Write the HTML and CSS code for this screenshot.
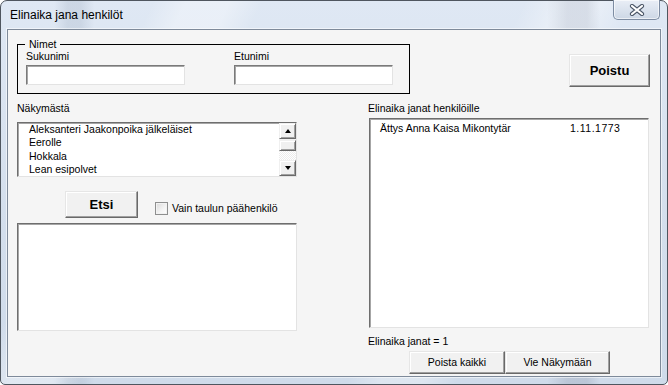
FILE: index.html
```html
<!DOCTYPE html>
<html lang="fi">
<head>
<meta charset="utf-8">
<title>Elinaika jana henkilöt</title>
<link rel="stylesheet" href="styles.css">
</head>
<body>
<div class="window">
  <div class="titlebar">
    <span class="title">Elinaika jana henkilöt</span>
    <div class="close">
      <svg width="16" height="12" viewBox="0 0 16 12">
        <path d="M3 2 L13 10 M13 2 L3 10" stroke="#4a5566" stroke-width="4.2" stroke-linecap="round"/>
        <path d="M3 2 L13 10 M13 2 L3 10" stroke="#ffffff" stroke-width="2.2" stroke-linecap="round"/>
      </svg>
    </div>
  </div>
  <div class="client">
    <div class="top-row">
      <fieldset class="group">
        <legend>Nimet</legend>
        <div class="fields">
          <div class="field">
            <span class="field-label">Sukunimi</span>
            <span class="textbox"></span>
          </div>
          <div class="field field-second">
            <span class="field-label">Etunimi</span>
            <span class="textbox"></span>
          </div>
        </div>
      </fieldset>
      <button class="btn btn-bold btn-poistu">Poistu</button>
    </div>
    <div class="main">
      <div class="col-left">
        <div class="label">Näkymästä</div>
        <div class="listbox list-views">
          <ul class="items">
            <li>Aleksanteri Jaakonpoika jälkeläiset</li>
            <li>Eerolle</li>
            <li>Hokkala</li>
            <li>Lean esipolvet</li>
          </ul>
          <div class="scrollbar">
            <div class="sb-btn"><span class="arrow-up"></span></div>
            <div class="sb-gap"></div>
            <div class="sb-thumb"></div>
            <div class="sb-track"></div>
            <div class="sb-btn sb-down"><span class="arrow-down"></span></div>
          </div>
        </div>
        <div class="search-row">
          <button class="btn btn-bold btn-etsi">Etsi</button>
          <div class="check">
            <span class="checkbox"></span>
            <span class="check-text">Vain taulun päähenkilö</span>
          </div>
        </div>
        <div class="listbox list-results"></div>
      </div>
      <div class="col-right">
        <div class="label">Elinaika janat henkilöille</div>
        <div class="listbox list-spans">
          <div class="span-row">
            <span class="span-name">Ättys Anna Kaisa Mikontytär</span>
            <span class="span-date">1.11.1773</span>
          </div>
        </div>
        <div class="count">Elinaika janat = 1</div>
        <div class="btn-row">
          <button class="btn btn-clear">Poista kaikki</button>
          <button class="btn btn-export">Vie Näkymään</button>
        </div>
      </div>
    </div>
  </div>
</div>
</body>
</html>
```

FILE: styles.css
```css
* { box-sizing: border-box; }

html, body {
  margin: 0;
  padding: 0;
  background: #ffffff;
}

body {
  font-family: "Liberation Sans", Arial, sans-serif;
  font-size: 10.5px;
  color: #000;
}

.window {
  width: 668px;
  height: 385px;
  border: 1px solid #4f565f;
  border-radius: 7px 7px 5px 5px;
  padding: 0 6px 7px 6px;
  display: flex;
  flex-direction: column;
  background:
    linear-gradient(115deg, rgba(255,255,255,0) 0 18%, rgba(255,255,255,0.35) 22% 27%, rgba(255,255,255,0) 31% 62%, rgba(255,255,255,0.3) 66% 71%, rgba(255,255,255,0) 75%),
    linear-gradient(90deg, rgba(150,165,185,0) 0 8%, rgba(150,165,185,0.25) 10% 12%, rgba(150,165,185,0) 14% 82%, rgba(140,150,170,0.3) 85% 88%, rgba(150,165,185,0) 90%),
    linear-gradient(180deg, #dfe8f4 0%, #d3deec 60%, #cfdbea 100%);
}

.titlebar {
  height: 28px;
  display: flex;
  align-items: flex-start;
  flex: none;
}

.title {
  font-size: 12px;
  line-height: 14px;
  margin: 7px 0 0 3px;
  color: #000;
}

.close {
  margin: -1px 1px 0 auto;
  width: 47px;
  height: 20px;
  border: 1px solid #7d8ca2;
  border-top: none;
  border-radius: 0 0 5px 5px;
  background: linear-gradient(180deg, #e9eef6 0%, #dbe3ee 50%, #cdd7e5 100%);
  box-shadow: inset 0 0 0 1px rgba(255,255,255,0.6);
  display: flex;
  align-items: center;
  justify-content: center;
}

.close svg { display: block; margin-top: 1px; }

.client {
  width: 654px;
  height: 348px;
  border: 1px solid #7e8a9a;
  box-shadow: 0 0 0 1px rgba(255,255,255,0.55);
  background: #f5f5f5;
  padding: 8px 0 0 9px;
  flex: none;
}

/* top row */
.top-row {
  display: flex;
  align-items: flex-start;
}

.group {
  margin: 0;
  padding: 0 0 8px 8px;
  width: 393px;
  border: 1px solid #000;
  min-width: 0;
}

.group legend {
  margin-left: -1px;
  padding: 0 4px;
  font-size: 10.5px;
  line-height: 12px;
}

.fields {
  display: flex;
}

.field {
  width: 159px;
  display: flex;
  flex-direction: column;
}

.field-second { margin-left: 49px; }

.field-label {
  line-height: 13px;
  height: 13px;
}

.textbox {
  display: block;
  margin-top: 2px;
  height: 20px;
  background: #fff;
  border: 1px solid;
  border-color: #7a7a7a #e3e3e3 #e3e3e3 #7a7a7a;
  box-shadow: inset 1px 1px 0 #a6a6a6;
}

.btn {
  font-family: inherit;
  font-size: 10.5px;
  color: #000;
  margin: 0;
  padding: 0;
  background: #f1f1f1;
  border: 1px solid;
  border-color: #e6e6e6 #696969 #696969 #e6e6e6;
  box-shadow: inset -1px -1px 0 #a0a0a0, inset 1px 1px 0 #ffffff;
  border-radius: 0;
  line-height: 1;
}

.btn-bold {
  font-size: 13px;
  font-weight: bold;
}

.btn-poistu {
  margin: 16px 0 0 159px;
  width: 81px;
  height: 33px;
}

/* main area */
.main {
  display: flex;
  margin-top: 8px;
}

.col-left {
  width: 280px;
  display: flex;
  flex-direction: column;
}

.col-right {
  width: 281px;
  margin-left: 71px;
  display: flex;
  flex-direction: column;
}

.label {
  line-height: 13px;
  height: 13px;
}

.listbox {
  background: #fff;
  border: 1px solid;
  border-color: #6e6e6e #e3e3e3 #e3e3e3 #6e6e6e;
  box-shadow: inset 1px 1px 0 #a6a6a6;
}

.list-views {
  margin-top: 7px;
  height: 55px;
  display: flex;
  overflow: hidden;
}

.items {
  list-style: none;
  margin: 0;
  padding: 0 0 0 11px;
  flex: 1;
  line-height: 13.3px;
  white-space: nowrap;
}

.scrollbar {
  width: 17px;
  display: flex;
  flex-direction: column;
  flex: none;
}

.sb-btn, .sb-thumb {
  background: #f0f0f0;
  border: 1px solid;
  border-color: #f0f0f0 #696969 #696969 #f0f0f0;
  box-shadow: inset 1px 1px 0 #fff, inset -1px -1px 0 #a0a0a0;
  display: flex;
  align-items: center;
  justify-content: center;
}

.sb-btn { height: 16px; }
.sb-gap { height: 1px; background: #f0f0f0; }
.sb-thumb { height: 11px; }

.sb-track {
  flex: 1;
  background: repeating-conic-gradient(#ffffff 0 25%, #ececec 0 50%) 0 0 / 2px 2px;
}

.arrow-up {
  width: 0;
  height: 0;
  border-left: 3.5px solid transparent;
  border-right: 3.5px solid transparent;
  border-bottom: 4px solid #000;
}

.arrow-down {
  width: 0;
  height: 0;
  border-left: 3.5px solid transparent;
  border-right: 3.5px solid transparent;
  border-top: 4px solid #000;
}

.search-row {
  display: flex;
  align-items: flex-start;
  margin-top: 14px;
}

.btn-etsi {
  margin-left: 48px;
  width: 73px;
  height: 27px;
}

.check {
  display: flex;
  align-items: center;
  margin: 10px 0 0 17px;
  height: 15px;
}

.checkbox {
  width: 13px;
  height: 13px;
  border: 1px solid #8e8f8f;
  background: linear-gradient(135deg, #d9d9d9 0%, #f4f4f4 60%, #ffffff 100%);
  box-shadow: inset 0 0 0 1px #f2f2f2;
}

.check-text {
  margin-left: 4px;
  line-height: 13px;
}

.list-results {
  margin-top: 5px;
  height: 108px;
}

.list-spans {
  margin: 3px 0 0 1px;
  width: 280px;
  height: 210px;
  padding: 2px 0 0 10px;
}

.span-row {
  display: flex;
  line-height: 14px;
  white-space: nowrap;
}

.span-name { width: 190px; }

.span-date { letter-spacing: 0.5px; }

.count {
  margin-top: 7px;
  line-height: 13px;
  height: 13px;
}

.btn-row {
  display: flex;
  margin: 3px 0 0 41px;
}

.btn-clear {
  width: 96px;
  height: 23px;
}

.btn-export {
  width: 105px;
  height: 23px;
}
```
